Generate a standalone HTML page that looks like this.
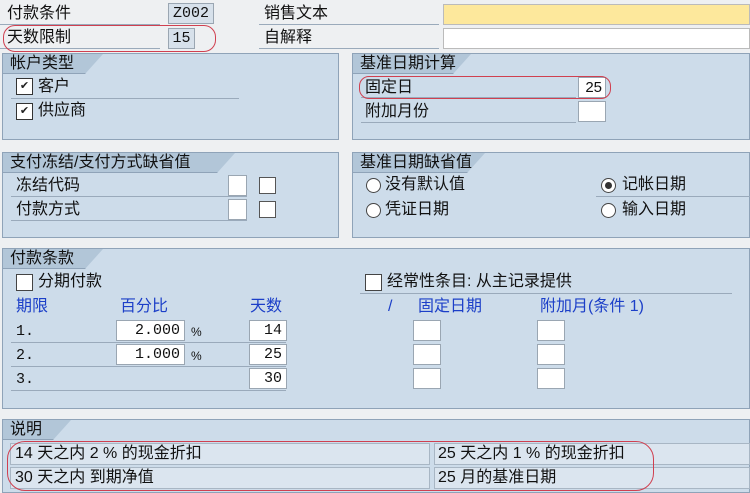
<!DOCTYPE html>
<html><head><meta charset="utf-8"><style>
*{margin:0;padding:0;box-sizing:border-box}
body{width:750px;height:493px;overflow:hidden;background:#eef0f2;font-family:"Liberation Sans","Noto Sans CJK SC",sans-serif;font-size:16px;color:#111;position:relative}
div,span{position:absolute}
.t{white-space:nowrap;line-height:18px}
.pan{background:#cddcea;border:1px solid #8fa3b8}
.tab{background:#b2c6d8;height:20px;line-height:20px;padding-left:7px;clip-path:polygon(0 0,100% 0,calc(100% - 18px) 100%,0 100%);border-bottom:1px solid #8fa3b8}
.f{background:#fff;border:1px solid #9aa6b2;height:21px;line-height:19px;text-align:right;padding-right:4px;font-family:"Liberation Mono","Noto Sans CJK SC",monospace;font-size:15px}
.ln{height:1px;background:#9aaabb}
.cb{width:17px;height:17px;background:#fff;border:1px solid #333}
.rd{width:15px;height:15px;border-radius:50%;background:#fff;border:1px solid #444}
.blue{color:#1c3fc8}
.red{border:1.5px solid #d04050;border-radius:14px}
.ck{font-size:11px;line-height:15px;text-align:center;width:15px;color:#222}
</style></head><body>
<div class="t" style="left:7px;top:5px">付款条件</div>
<div class="ln" style="left:0;top:24px;width:160px"></div>
<div class="f" style="left:168px;top:3px;width:46px;background:#d7e1eb;text-align:center;padding:0">Z002</div>
<div class="t" style="left:7px;top:29px">天数限制</div>
<div class="ln" style="left:0;top:48px;width:160px"></div>
<div class="f" style="left:168px;top:28px;width:27px;background:#d7e1eb;text-align:center;padding:0">15</div>
<div class="red" style="left:3px;top:25px;width:213px;height:27px;border-radius:12px"></div>
<div class="t" style="left:264px;top:5px">销售文本</div>
<div class="ln" style="left:259px;top:24px;width:180px"></div>
<div class="t" style="left:264px;top:29px">自解释</div>
<div class="ln" style="left:259px;top:48px;width:180px"></div>
<div style="left:443px;top:4px;width:307px;height:21px;background:#fde89c;border:1px solid #bbb"></div>
<div style="left:443px;top:28px;width:307px;height:21px;background:#fff;border:1px solid #bbb"></div>

<div class="pan" style="left:2px;top:53px;width:337px;height:87px"></div>
<div class="tab t" style="left:3px;top:54px;width:100px">帐户类型</div>
<div class="cb" style="left:16px;top:78px"><span class="ck" style="left:0;top:0">✔</span></div>
<div class="t" style="left:38px;top:78px">客户</div>
<div class="ln" style="left:11px;top:98px;width:228px"></div>
<div class="cb" style="left:16px;top:103px"><span class="ck" style="left:0;top:0">✔</span></div>
<div class="t" style="left:38px;top:102px">供应商</div>

<div class="pan" style="left:352px;top:53px;width:398px;height:87px"></div>
<div class="tab t" style="left:353px;top:54px;width:118px">基准日期计算</div>
<div class="t" style="left:365px;top:79px">固定日</div>
<div class="ln" style="left:361px;top:97px;width:215px"></div>
<div class="f" style="left:578px;top:77px;width:28px;font-family:'Liberation Sans';padding-right:3px">25</div>
<div class="red" style="left:359px;top:76px;width:252px;height:23px;border-radius:10px"></div>
<div class="t" style="left:365px;top:103px">附加月份</div>
<div class="ln" style="left:361px;top:122px;width:215px"></div>
<div class="f" style="left:578px;top:101px;width:28px"></div>

<div class="pan" style="left:2px;top:152px;width:337px;height:86px"></div>
<div class="tab t" style="left:3px;top:153px;width:232px">支付冻结/支付方式缺省值</div>
<div class="t" style="left:16px;top:177px">冻结代码</div>
<div class="ln" style="left:11px;top:196px;width:236px"></div>
<div class="f" style="left:228px;top:175px;width:19px"></div>
<div class="cb" style="left:259px;top:177px;border-color:#555"></div>
<div class="t" style="left:16px;top:201px">付款方式</div>
<div class="ln" style="left:11px;top:220px;width:236px"></div>
<div class="f" style="left:228px;top:199px;width:19px"></div>
<div class="cb" style="left:259px;top:201px;border-color:#555"></div>

<div class="pan" style="left:352px;top:152px;width:398px;height:86px"></div>
<div class="tab t" style="left:353px;top:153px;width:132px">基准日期缺省值</div>
<div class="rd" style="left:366px;top:178px"></div>
<div class="t" style="left:385px;top:176px">没有默认值</div>
<div class="rd" style="left:601px;top:178px"></div><div style="left:605px;top:182px;width:7px;height:7px;border-radius:50%;background:#333"></div>
<div class="t" style="left:622px;top:176px">记帐日期</div>
<div class="ln" style="left:596px;top:196px;width:154px"></div>
<div class="rd" style="left:366px;top:203px"></div>
<div class="t" style="left:385px;top:201px">凭证日期</div>
<div class="rd" style="left:601px;top:203px"></div>
<div class="t" style="left:622px;top:201px">输入日期</div>

<div class="pan" style="left:2px;top:248px;width:748px;height:161px"></div>
<div class="tab t" style="left:3px;top:249px;width:100px">付款条款</div>
<div class="cb" style="left:16px;top:274px;border-color:#444"></div>
<div class="t" style="left:38px;top:273px">分期付款</div>
<div class="cb" style="left:365px;top:274px;border-color:#444"></div>
<div class="t" style="left:387px;top:273px">经常性条目: 从主记录提供</div>
<div class="ln" style="left:360px;top:293px;width:372px"></div>
<div class="t blue" style="left:16px;top:298px">期限</div>
<div class="t blue" style="left:120px;top:298px">百分比</div>
<div class="t blue" style="left:250px;top:298px">天数</div>
<div class="t blue" style="left:388px;top:298px">/</div>
<div class="t blue" style="left:418px;top:298px">固定日期</div>
<div class="t blue" style="left:540px;top:298px">附加月(条件 1)</div>

<div class="t" style="left:16px;top:323px;font-family:'Liberation Mono';font-size:15px">1.</div>
<div class="ln" style="left:11px;top:342px;width:275px"></div>
<div class="f" style="left:116px;top:320px;width:69px">2.000</div>
<div class="t" style="left:191px;top:323px;font-size:12px">%</div>
<div class="f" style="left:249px;top:320px;width:38px">14</div>
<div class="t" style="left:16px;top:347px;font-family:'Liberation Mono';font-size:15px">2.</div>
<div class="ln" style="left:11px;top:366px;width:275px"></div>
<div class="f" style="left:116px;top:344px;width:69px">1.000</div>
<div class="t" style="left:191px;top:347px;font-size:12px">%</div>
<div class="f" style="left:249px;top:344px;width:38px">25</div>
<div class="t" style="left:16px;top:371px;font-family:'Liberation Mono';font-size:15px">3.</div>
<div class="ln" style="left:11px;top:390px;width:275px"></div>
<div class="f" style="left:249px;top:368px;width:38px">30</div>
<div class="f" style="left:413px;top:320px;width:28px"></div>
<div class="f" style="left:413px;top:344px;width:28px"></div>
<div class="f" style="left:413px;top:368px;width:28px"></div>
<div class="f" style="left:537px;top:320px;width:28px"></div>
<div class="f" style="left:537px;top:344px;width:28px"></div>
<div class="f" style="left:537px;top:368px;width:28px"></div>

<div class="pan" style="left:2px;top:419px;width:748px;height:74px"></div>
<div class="tab t" style="left:3px;top:420px;width:68px">说明</div>
<div style="left:10px;top:443px;width:420px;height:22px;background:#dbe5ef;border:1px solid #a8b6c4"></div>
<div style="left:434px;top:443px;width:316px;height:22px;background:#dbe5ef;border:1px solid #a8b6c4"></div>
<div style="left:10px;top:467px;width:420px;height:22px;background:#dbe5ef;border:1px solid #a8b6c4"></div>
<div style="left:434px;top:467px;width:316px;height:22px;background:#dbe5ef;border:1px solid #a8b6c4"></div>
<div class="t" style="left:15px;top:445px">14 天之内 2 % 的现金折扣</div>
<div class="t" style="left:438px;top:445px">25 天之内 1 % 的现金折扣</div>
<div class="t" style="left:15px;top:469px">30 天之内 到期净值</div>
<div class="t" style="left:438px;top:469px">25 月的基准日期</div>
<div class="red" style="left:7px;top:441px;width:647px;height:50px;border-radius:18px"></div>
</body></html>
